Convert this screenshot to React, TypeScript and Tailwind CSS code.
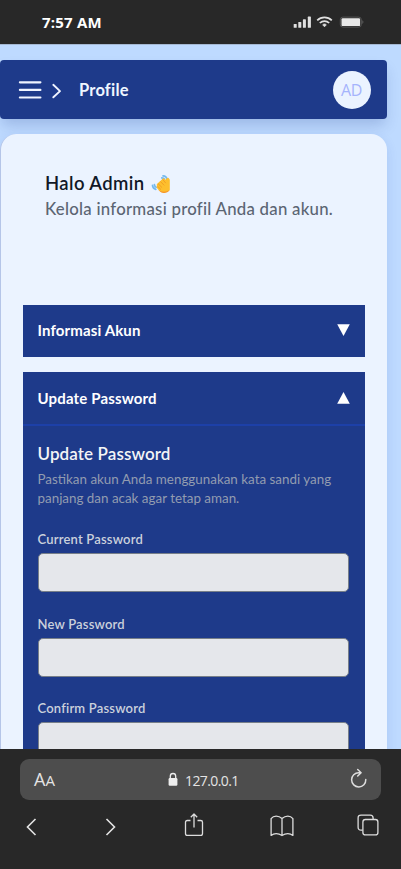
import React from "react";

function StatusBar() {
  return (
    <div className="flex h-11 shrink-0 items-center justify-between bg-[#282828] pr-[37px] pl-[42px] font-['Open_Sans','Noto_Sans',sans-serif] text-white">
      <span className="text-[15px] leading-5 font-bold tracking-[0.2px]">7:57 AM</span>
      <div className="flex h-3 items-center">
        <svg width="19" height="12" viewBox="0 0 19 12" fill="#e0e0e0">
          <rect x="0.7" y="8" width="3" height="3.8" rx="0.6" />
          <rect x="5.3" y="6" width="3" height="5.8" rx="0.6" />
          <rect x="9.9" y="3.3" width="3" height="8.5" rx="0.6" />
          <rect x="14.8" y="0.6" width="3.1" height="11.2" rx="0.6" />
        </svg>
        <svg className="ml-1" width="17" height="12" viewBox="0 0 17 12" fill="none" stroke="#e0e0e0" strokeWidth="1.7">
          <path d="M1.2 4.3C5.3 .4 11.7 .4 15.8 4.3" />
          <path d="M3.8 7C6.5 4.5 10.5 4.5 13.2 7" />
          <path d="M8.5 8a2.6 2.6 0 0 1 1.8.8L8.5 10.8 6.7 8.8A2.6 2.6 0 0 1 8.5 8Z" fill="#e0e0e0" strokeWidth="0.8" />
        </svg>
        <svg className="ml-1.5" width="25" height="12" viewBox="0 0 25 12">
          <rect x="1.3" y="1.1" width="21" height="10" rx="2.6" fill="none" stroke="#555" strokeWidth="1" />
          <rect x="2.5" y="2.2" width="18.6" height="7.9" rx="1.2" fill="#e8e8e8" />
          <path d="M23.2 4.3q1.3.5 1.3 1.8t-1.3 1.8Z" fill="#555" />
        </svg>
      </div>
    </div>
  );
}

function Header() {
  return (
    <header className="flex h-[59px] w-[386.5px] shrink-0 items-center rounded-[4px] bg-[#1e3a8a] pr-4 pl-[18px] shadow-[0_8px_14px_-2px_rgba(30,58,138,0.22)]">
      <svg width="24" height="20" viewBox="0 0 24 20" stroke="#f0f4ff" strokeWidth="2.2" strokeLinecap="round">
        <path d="M1.9 2.3h20.5M1.9 9.9h20.5M1.9 17.5h20.5" />
      </svg>
      <svg className="mt-0.5 ml-[9px]" width="12" height="18" viewBox="0 0 12 18" fill="none" stroke="#f0f4ff" strokeWidth="1.9" strokeLinecap="round" strokeLinejoin="round">
        <path d="M2.3 2.8 9 9.1l-6.7 6.2" />
      </svg>
      <span className="ml-4 text-[16.5px] leading-6 font-bold tracking-[0.2px] text-[#eff6ff]">Profile</span>
      <div className="ml-auto flex size-[38px] items-center justify-center rounded-full bg-[#ebf3ff] font-['Open_Sans','Noto_Sans',sans-serif] text-[16px] tracking-[-0.3px] text-[#a5b4fc]">
        AD
      </div>
    </header>
  );
}

function WavingHand() {
  return (
    <svg className="ml-[6px]" width="20" height="20" viewBox="0 0 20 20" fill="none">
      <path d="M12 1.9q3.6.2 4 3.6M10.8 3.9q2 .2 2.7 1.3M1.5 11.3q.2 3.4 3.3 4.1M3.4 10.7q.2 1.9 1.8 2.5" stroke="#75b9ee" strokeWidth="1.7" strokeLinecap="round" />
      <path d="M6.2 9.7 12 4.5q1-.6 1.6.3L14 6l2.2-2q1.2-.7 1.8.5l.8 1.2V16q-2.4 3.4-6.2 3.1Q10 18.8 8 16.5l-2.2-2.7q-.6-1 .3-1.7-1-1.3.1-2.4Z" fill="#fdbf2d" />
      <path d="m7.2 9.8 3.6 3.5M9.6 7.7l3.3 3.4M12 5.8l2.6 3.1M6.9 12.6l2.8 2.7" stroke="#ee9522" strokeWidth="0.8" strokeLinecap="round" />
      <path d="M7.5 16q2 2.8 5.1 3.1 3.8.3 6.2-3.1-3 2-6 1.8T7.5 16Z" fill="#f59332" />
    </svg>
  );
}

function Field({ label }: { label: string }) {
  return (
    <label className="block h-[84.4px]">
      <span className="block text-[13px] leading-[18px] font-semibold tracking-[0.19px] text-[#cbd1dc]">{label}</span>
      <input
        type="password"
        className="mt-[5px] block h-[39px] w-full rounded-[5px] border border-[#777f89] bg-[#e5e7eb] outline-none"
      />
    </label>
  );
}

function Arrow({ up = false }: { up?: boolean }) {
  return (
    <svg width="13" height="12" viewBox="0 0 13 12" fill="white">
      <path d={up ? "M6.5 0 12.8 11.8H.2Z" : "M.2.2h12.6L6.5 12Z"} />
    </svg>
  );
}

function Content() {
  return (
    <main className="flex h-[705px] shrink-0 flex-col overflow-hidden border-t border-[#a5b8d2] bg-[#bedaff] pt-[15px]">
      <Header />
      <section className="mt-[15px] h-[640px] w-[386.5px] shrink-0 rounded-t-[16px] border-l border-[#b5c5e8] bg-[#ebf3ff] pr-[22px] pl-[21.5px] shadow-[0_4px_12px_rgba(30,64,175,0.12)]">
        <div className="h-[170.5px] pt-[37px] pl-[22.5px]">
          <h1 className="flex h-[26px] items-center text-[18.5px] font-semibold tracking-[0.4px] text-[#111827]">
            Halo Admin
            <WavingHand />
          </h1>
          <p className="text-[16.8px] leading-6 font-medium tracking-[0.25px] whitespace-nowrap text-[#5b6573]">
            Kelola informasi profil Anda dan akun.
          </p>
        </div>
        <div className="flex h-[52.5px] items-center justify-between bg-[#1e3a8a] px-[15px] pb-[2px]">
          <span className="text-[15px] font-bold tracking-[0.14px] text-white">Informasi Akun</span>
          <Arrow />
        </div>
        <div className="mt-[15px] h-[430px] bg-[#1e3a8a]">
          <div className="flex h-[53.5px] items-center justify-between border-b-2 border-[#1d40a8] px-[15px]">
            <span className="text-[15px] font-bold tracking-[0.16px] text-white">Update Password</span>
            <Arrow up />
          </div>
          <div className="pt-[16px] pr-[16px] pl-[15px]">
            <h2 className="text-[17px] leading-6 font-semibold tracking-[0.1px] text-[#f3f4f6]">Update Password</h2>
            <p className="mt-[4.5px] text-[13.4px] leading-[18.7px] tracking-[0px] whitespace-nowrap text-[#929cb0]">
              Pastikan akun Anda menggunakan kata sandi yang
              <br />
              panjang dan acak agar tetap aman.
            </p>
            <div className="mt-[23px]">
              <Field label="Current Password" />
              <Field label="New Password" />
              <Field label="Confirm Password" />
            </div>
          </div>
        </div>
      </section>
    </main>
  );
}

function BrowserBar() {
  return (
    <footer className="h-[120px] bg-[#282828] pt-[10px] font-['Open_Sans','Noto_Sans',sans-serif] text-[#e4e4e4]">
      <div className="mx-5 flex h-[41px] items-center rounded-[9px] bg-[#4d4d4d] px-[14px]">
        <span className="w-[134px] text-[18px] leading-6">
          A<span className="text-[15px]">A</span>
        </span>
        <svg width="10" height="15" viewBox="0 0 10 15">
          <path d="M2.3 7V4.2a2.7 2.7 0 0 1 5.4 0V7" fill="none" stroke="#eee" strokeWidth="1.3" />
          <rect x="0.6" y="6" width="8.8" height="7.8" rx="1.2" fill="#eee" />
        </svg>
        <span className="mt-px ml-[7px] text-[14px] tracking-[-0.6px]">127.0.0.1</span>
        <svg className="mb-[3px] ml-auto" width="17" height="21" viewBox="0 0 17 21" fill="none" stroke="#ddd" strokeWidth="1.5" strokeLinecap="round" strokeLinejoin="round">
          <path d="M15.8 11.5A7.1 7.1 0 1 1 8.8 4.7h1.4M7.7 1.5l3.4 3.2-3.4 3.3" />
        </svg>
      </div>
      <div className="mt-[12px] flex h-[30px] items-center pl-[25px]">
        <svg width="13" height="20" viewBox="0 0 13 20" fill="none" stroke="#e4e4e4" strokeWidth="1.6">
          <path d="M10.5 2 2.5 10l8 8" />
        </svg>
        <svg className="ml-[66px]" width="13" height="20" viewBox="0 0 13 20" fill="none" stroke="#e4e4e4" strokeWidth="1.6">
          <path d="m2.5 2 8 8-8 8" />
        </svg>
        <svg className="mb-[6px] ml-[67px]" width="20" height="25" viewBox="0 0 20 25" fill="none" stroke="#ddd" strokeWidth="1.3" strokeLinejoin="round">
          <path d="M6.5 8.5H3.3Q1.5 8.5 1.5 10.3v11.2q0 1.9 1.8 1.9h13.4q1.8 0 1.8-1.9V10.3q0-1.8-1.8-1.8h-3.2M10 15.5V2M6.8 5.2 10 2l3.2 3.2" />
        </svg>
        <svg className="mb-[2px] ml-[66px]" width="24" height="22" viewBox="0 0 24 22" fill="none" stroke="#ddd" strokeWidth="1.3" strokeLinejoin="round">
          <path d="M12 3.6Q9.4 1.2 6.2 1.2T1.1 3.6v16.8q2.2-1.7 5.1-1.7t5.8 1.8q2.9-1.8 5.8-1.8t5.1 1.7V3.6q-2-2.4-5.1-2.4T12 3.6Zm0 0v16.9" />
        </svg>
        <svg className="mb-[5px] ml-[63px]" width="22" height="22" viewBox="0 0 22 22" fill="none" stroke="#ddd" strokeWidth="1.3">
          <path d="M5.7 16.1H4Q1.1 16.1 1.1 13.2V4Q1.1 1.1 4 1.1h9.2q2.9 0 2.9 2.9v1.3" />
          <rect x="5.9" y="5.5" width="15" height="15.4" rx="2.5" />
        </svg>
      </div>
    </footer>
  );
}

export default function App() {
  return (
    <div className="flex h-[869px] w-[401px] flex-col overflow-hidden bg-[#282828] font-['Lato','Liberation_Sans',sans-serif]">
      <StatusBar />
      <Content />
      <BrowserBar />
    </div>
  );
}
